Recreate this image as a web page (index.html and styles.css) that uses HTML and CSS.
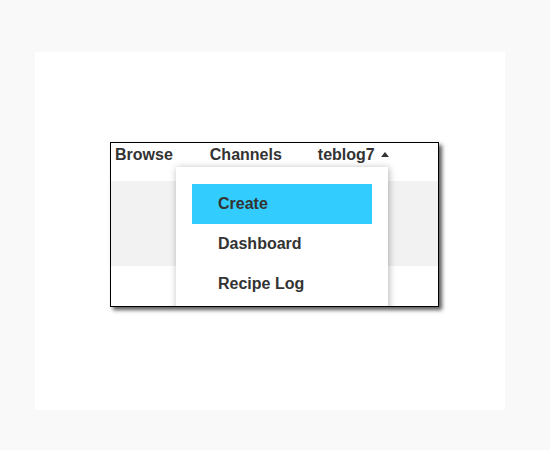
FILE: index.html
```html
<!DOCTYPE html>
<html>
<head>
<meta charset="utf-8">
<link rel="stylesheet" href="styles.css">
</head>
<body>
<div class="panel">
  <div class="frame">
    <nav class="nav">
      <span class="nav-item">Browse</span>
      <span class="nav-item">Channels</span>
      <span class="nav-item user">teblog7 <span class="caret"></span></span>
    </nav>
    <div class="band"></div>
    <div class="dropdown">
      <div class="dd-item active">Create</div>
      <div class="dd-item">Dashboard</div>
      <div class="dd-item">Recipe Log</div>
    </div>
  </div>
</div>
</body>
</html>
```
FILE: styles.css
```css
html, body {
  margin: 0;
  padding: 0;
  background: #f9f9f9;
  font-family: "Liberation Sans", Arial, sans-serif;
}
.panel {
  margin: 52px 0 0 35px;
  width: 470px;
  height: 358px;
  background: #ffffff;
  box-sizing: border-box;
  padding: 90px 0 0 75px;
}
.frame {
  position: relative;
  width: 329px;
  height: 165px;
  box-sizing: border-box;
  border: 1px solid #000;
  background: #fff;
  overflow: hidden;
  box-shadow: 3px 3px 4px rgba(0, 0, 0, 0.65);
}
.nav {
  display: flex;
  align-items: flex-start;
  gap: 37px;
  height: 38px;
  box-sizing: border-box;
  padding: 3px 0 0 4px;
  font-size: 16px;
  font-weight: bold;
  color: #333;
}
.nav-item {
  line-height: 18px;
  white-space: nowrap;
}
.user {
  display: flex;
  align-items: center;
  gap: 6px;
  margin-left: -1px;
}
.caret {
  width: 0;
  height: 0;
  border-left: 4px solid transparent;
  border-right: 4px solid transparent;
  border-bottom: 5px solid #333;
  margin-top: -1px;
}
.band {
  height: 85px;
  background: #f2f2f2;
}
.dropdown {
  position: absolute;
  left: 65px;
  top: 24px;
  width: 212px;
  height: 200px;
  background: #fff;
  box-sizing: border-box;
  padding-top: 17px;
  box-shadow: 1px 1px 7px rgba(0, 0, 0, 0.3);
}
.dd-item {
  margin: 0 16px;
  height: 40px;
  line-height: 40px;
  padding-left: 26px;
  font-size: 16px;
  font-weight: bold;
  color: #333;
}
.dd-item.active {
  background: #33ccff;
}
```
